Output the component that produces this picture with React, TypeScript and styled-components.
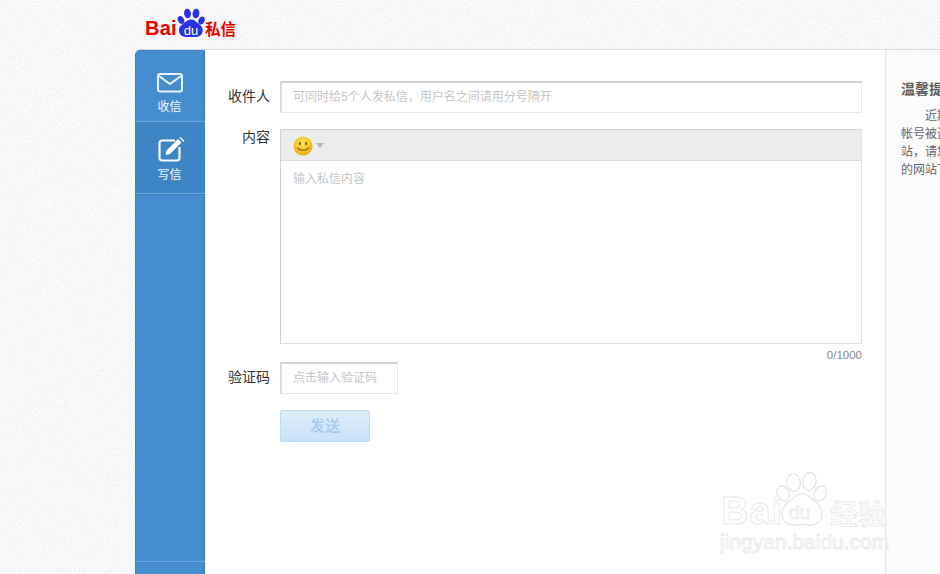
import React from "react";
import styled, { createGlobalStyle } from "styled-components";

const Global = createGlobalStyle`
  html, body { margin: 0; padding: 0; background: #f4f4f4; }
  * { box-sizing: border-box; }
`;
const cjk = `"Liberation Sans", "Noto Sans CJK SC", sans-serif`;
const noise = `data:image/svg+xml,%3Csvg xmlns='http://www.w3.org/2000/svg' width='300' height='300'%3E%3Cfilter id='n'%3E%3CfeTurbulence type='fractalNoise' baseFrequency='.9' numOctaves='2' stitchTiles='stitch'/%3E%3CfeColorMatrix values='0 0 0 0 1 0 0 0 0 1 0 0 0 0 1 2.4 0 0 0 -.8'/%3E%3C/filter%3E%3Crect width='300' height='300' filter='url(%23n)'/%3E%3C/svg%3E`;

const Page = styled.div`
  position: relative;
  width: 940px;
  height: 574px;
  overflow: hidden;
  font-family: ${cjk};
  background-color: #f1f1f1;
  background-image: url("${noise}");
`;
const Header = styled.header`
  height: 50px;
  padding: 8px 0 0 145px;
`;
const Logo = styled.div`
  display: flex;
  align-items: flex-end;
  height: 30px;
  color: #e10601;
`;
const LogoWord = styled.span`
  font: bold 20px/19px "Liberation Sans", sans-serif;
  letter-spacing: 0.2px;
  width: 31px;
  height: 19px;
  margin-bottom: 0;
`;
const Paw = styled.div`
  position: relative;
  width: 29px;
  height: 30px;
  flex: none;
`;
const PawDu = styled.span`
  position: absolute;
  left: 5px;
  top: 16px;
  width: 20px;
  text-align: center;
  font: 13px/13px "Liberation Sans", sans-serif;
  color: #fff;
`;
const LogoCn = styled.span`
  margin-left: 0;
  font: bold 15.5px/18px "Noto Sans CJK SC", sans-serif;
  color: #e10601;
  height: 19px;
`;
const Shell = styled.div`
  display: flex;
  width: 805px;
  height: 524px;
  margin-left: 135px;
  background: #fff;
  border-radius: 5px 0 0 0;
  box-shadow: 0 -1px 0 #dcdcdc;
`;
const Sidebar = styled.nav`
  position: relative;
  flex: none;
  width: 70px;
  background: #468dcf;
  border-left: 1px solid #3f7fba;
  border-right: 2px solid #3f81bf;
  border-top: 1px solid #3d7fbc;
  border-radius: 5px 0 0 0;
`;
const NavItem = styled.div<{ $active?: boolean; $h: number }>`
  height: ${(p) => p.$h}px;
  margin-right: -2px;
  padding-right: 2px;
  background: ${(p) => (p.$active ? "#3e85c5" : "transparent")};
  border-bottom: 1px solid #6ba6dc;
  box-shadow: 0 1px 0 #3f81bf;
  display: flex;
  flex-direction: column;
  align-items: center;
  color: #fff;
  font-size: 12px;
  line-height: 14px;
`;
const NavIcon = styled.svg<{ $top: number; $left?: number }>`
  display: block;
  margin-top: ${(p) => p.$top}px;
  margin-left: ${(p) => p.$left || 0}px;
`;
const NavLabel = styled.span<{ $top: number }>`
  margin-top: ${(p) => p.$top}px;
  opacity: 0.95;
`;
const SideFoot = styled.div`
  position: absolute;
  left: 0;
  right: -2px;
  bottom: 12px;
  height: 1px;
  background: #6ba6dc;
`;
const Main = styled.main`
  flex: none;
  width: 680px;
  padding: 31px 23px 0 0;
  display: grid;
  grid-template-columns: 65px 1fr;
  column-gap: 10px;
  align-content: start;
  background: #fff;
`;
const Label = styled.label<{ $pt: number }>`
  font-size: 14px;
  line-height: 20px;
  color: #333;
  text-align: right;
  padding-top: ${(p) => p.$pt}px;
`;
const Input = styled.div<{ $w?: string }>`
  width: ${(p) => p.$w || "100%"};
  height: 32px;
  padding-left: 11px;
  border-top: 2px solid #d2d2d2;
  border-left: 2px solid #dcdcdc;
  border-right: 1px solid #e6e6e6;
  border-bottom: 1px solid #e6e6e6;
  background: #fff;
  font-size: 12px;
  line-height: 28px;
  color: #c6c6c6;
`;
const Editor = styled.div`
  margin-top: 16px;
  height: 215px;
  border: 1px solid #e2e2e2;
  border-left-color: #cfcfcf;
  border-top-color: #d6d6d6;
  background: #fff;
`;
const EditorBar = styled.div`
  height: 31px;
  background: #ededed;
  border-bottom: 1px solid #dcdcdc;
  display: flex;
  align-items: center;
  gap: 3px;
  padding: 2px 0 0 12px;
`;
const Caret = styled.span`
  width: 0;
  height: 0;
  border-left: 4px solid transparent;
  border-right: 4px solid transparent;
  border-top: 5px solid #b5b5b5;
  margin-top: -1px;
`;
const EditorText = styled.div`
  padding: 10px 0 0 12px;
  font-size: 12px;
  line-height: 16px;
  color: #c6c6c6;
`;
const Count = styled.div`
  grid-column: 2;
  height: 18px;
  text-align: right;
  font-size: 11.5px;
  line-height: 22px;
  color: #888;
`;
const SendButton = styled.button`
  grid-column: 2;
  margin-top: 16px;
  width: 90px;
  height: 32px;
  padding: 0;
  border: 1px solid #bcdcf6;
  border-radius: 2px;
  background: linear-gradient(#deeefc, #c9e1f8);
  color: #a3c8ea;
  font: 500 15px/30px ${cjk};
`;
const TipPanel = styled.aside`
  flex: none;
  width: 125px;
  overflow: hidden;
  border-left: 1px solid #e6e6e6;
  background: #fbfbfb;
  padding: 29px 0 0 15px;
`;
const TipTitle = styled.h3`
  margin: 0;
  font-size: 14px;
  line-height: 20px;
  font-weight: bold;
  color: #5c5c5c;
  white-space: nowrap;
`;
const TipText = styled.p`
  margin: 8px 0 0;
  font-size: 12px;
  line-height: 18px;
  color: #666;
  white-space: nowrap;
`;
const Indent = styled.span`
  margin-left: 24px;
`;
const Watermark = styled.div`
  position: absolute;
  left: 720px;
  top: 472px;
  width: 172px;
  height: 82px;
  color: #fff;
  -webkit-text-stroke: 1px #ebebeb;
  pointer-events: none;
`;
const WmPaw = styled.svg`
  position: absolute;
  left: 56px;
  top: 0;
`;
const WmBai = styled.span`
  position: absolute;
  left: 1px;
  top: 20px;
  font: bold 38px/38px "Liberation Sans", sans-serif;
  letter-spacing: 1px;
`;
const WmDu = styled.span`
  position: absolute;
  left: 69px;
  top: 31px;
  font: 19px/20px "Liberation Sans", sans-serif;
`;
const WmCn = styled.span`
  position: absolute;
  left: 110px;
  top: 25px;
  font: 500 28px/32px "Noto Sans CJK SC", sans-serif;
`;
const WmUrl = styled.span`
  position: absolute;
  left: 0;
  top: 58px;
  font: 21px/24px "Liberation Sans", sans-serif;
  white-space: nowrap;
`;

export default function App() {
  return (
    <Page>
      <Global />
      <Header>
        <Logo>
          <LogoWord>Bai</LogoWord>
          <Paw>
            <svg width="29" height="30" viewBox="0 0 29 30">
              <g fill="#2932e1">
                <ellipse cx="11.500" cy="5.500" rx="3.400" ry="4.800" transform="rotate(-8 11.500 5.500)" />
                <ellipse cx="20" cy="5.500" rx="3.400" ry="4.800" transform="rotate(8 20 5.500)" />
                <ellipse cx="5" cy="12" rx="3" ry="4.200" transform="rotate(-25 5 12)" />
                <ellipse cx="25.500" cy="12.500" rx="3" ry="4.200" transform="rotate(25 25.500 12.500)" />
                <path d="M15.500 11.500c3 0 4.200 2.200 6.200 3.600 2.500 1.800 5 3.700 5 7.200 0 4.200-3.200 6.700-6.600 6.700H9.800c-3.400 0-6.800-2.500-6.800-6.700 0-3.500 2.400-5.400 5-7.200 2.300-1.600 4.300-3.600 7.500-3.600z" />
              </g>
            </svg>
            <PawDu>du</PawDu>
          </Paw>
          <LogoCn>私信</LogoCn>
        </Logo>
      </Header>
      <Shell>
        <Sidebar>
          <NavItem $h={71}>
            <NavIcon $top={22} width="26" height="20" viewBox="0 0 26 20" fill="none">
              <rect x="1" y="1" width="24" height="17.500" rx="2" stroke="#e6f1fb" strokeWidth="2" />
              <path d="M2 3l11 8 11-8" stroke="#e6f1fb" strokeWidth="2" />
            </NavIcon>
            <NavLabel $top={7}>收信</NavLabel>
          </NavItem>
          <NavItem $active $h={72}>
            <NavIcon $top={15} $left={4} width="27" height="25" viewBox="0 0 27 25" fill="none">
              <path d="M17 3.500H4a2.500 2.500 0 0 0-2.500 2.500v15A2.500 2.500 0 0 0 4 23.500h15a2.500 2.500 0 0 0 2.500-2.500V10" stroke="#fff" strokeWidth="2.200" />
              <path d="M8.500 13.500L20 2l3.500 3.500L12 17l-4.500 1z" fill="#fff" />
              <path d="M21.500.8l1-.8 4 3.800-1 1.200z" fill="#fff" />
            </NavIcon>
            <NavLabel $top={6}>写信</NavLabel>
          </NavItem>
          <SideFoot />
        </Sidebar>
        <Main>
          <Label htmlFor="to" $pt={5}>收件人</Label>
          <Input id="to">可同时给5个人发私信，用户名之间请用分号隔开</Input>
          <Label $pt={14}>内容</Label>
          <Editor>
            <EditorBar>
              <svg width="20" height="20" viewBox="0 0 20 20">
                <defs>
                  <radialGradient id="sm" cx="45%" cy="35%" r="70%">
                    <stop offset="0" stopColor="#ffe95a" />
                    <stop offset="1" stopColor="#e8a70e" />
                  </radialGradient>
                </defs>
                <circle cx="10" cy="10" r="9.500" fill="url(#sm)" />
                <ellipse cx="7" cy="7.500" rx="1" ry="1.800" fill="#7a5200" />
                <ellipse cx="13" cy="7.500" rx="1" ry="1.800" fill="#7a5200" />
                <path d="M4.500 11.500c1.500 3.500 9.500 3.500 11 0" fill="none" stroke="#8a5c00" strokeWidth="1.100" />
              </svg>
              <Caret />
            </EditorBar>
            <EditorText>输入私信内容</EditorText>
          </Editor>
          <Count>0/1000</Count>
          <Label $pt={5}>验证码</Label>
          <Input $w="118px">点击输入验证码</Input>
          <SendButton>发送</SendButton>
        </Main>
        <TipPanel>
          <TipTitle>温馨提示</TipTitle>
          <TipText>
            <Indent>近期有用户反映</Indent>
            <br />
            帐号被盗用于发送
            <br />
            站，请您不要轻信
            <br />
            的网站下载文件
          </TipText>
        </TipPanel>
      </Shell>
      <Watermark>
        <WmPaw width="52" height="56" viewBox="0 0 28 30">
          <g fill="#fff" stroke="#e2e2e2" strokeWidth="0.600">
            <ellipse cx="9.500" cy="5.500" rx="3.600" ry="4.800" transform="rotate(-8 9.500 5.500)" />
            <ellipse cx="18" cy="5" rx="3.600" ry="4.800" transform="rotate(8 18 5)" />
            <ellipse cx="3.800" cy="11.500" rx="3.200" ry="4.200" transform="rotate(-25 3.800 11.500)" />
            <ellipse cx="23.800" cy="11.500" rx="3.200" ry="4.200" transform="rotate(25 23.800 11.500)" />
            <path d="M14 11.500c3.200 0 4.400 2.400 6.400 3.800 2.400 1.700 4.400 3.600 4.400 7 0 4-3 6.200-6.400 6.200-2 0-3-.5-4.400-.5s-2.600.5-4.600.5c-3.500 0-6.200-2.200-6.200-6 0-3.400 2-5.400 4.400-7.100 2-1.400 3.100-3.900 6.400-3.900z" />
          </g>
        </WmPaw>
        <WmBai>Bai</WmBai>
        <WmDu>du</WmDu>
        <WmCn>经验</WmCn>
        <WmUrl>jingyan.baidu.com</WmUrl>
      </Watermark>
    </Page>
  );
}
